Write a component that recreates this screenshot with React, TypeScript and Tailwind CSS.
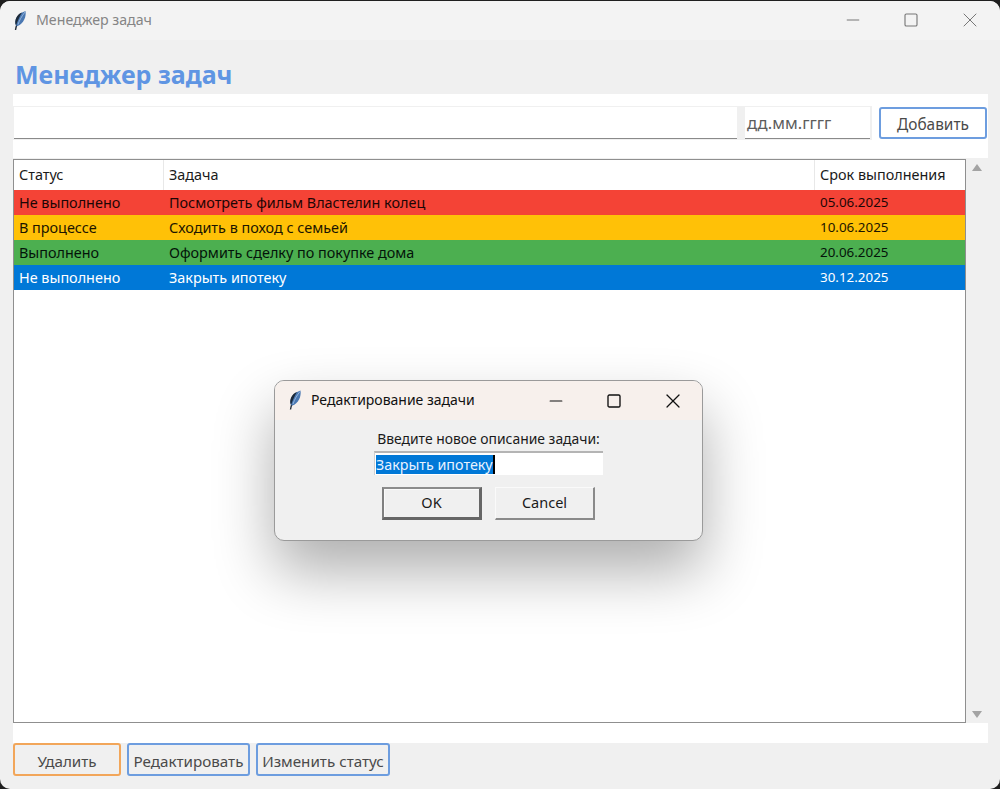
import { Minus, Square, X } from "lucide-react";

const rows = [
  { status: "Не выполнено", task: "Посмотреть фильм Властелин колец", due: "05.06.2025", color: "bg-[#f44336] text-[#1c0605]" },
  { status: "В процессе", task: "Сходить в поход с семьей", due: "10.06.2025", color: "bg-[#ffc107] text-[#1c1500]" },
  { status: "Выполнено", task: "Оформить сделку по покупке дома", due: "20.06.2025", color: "bg-[#4caf50] text-[#04140a]" },
  { status: "Не выполнено", task: "Закрыть ипотеку", due: "30.12.2025", color: "bg-[#0078d7] text-white" },
];

const Feather = ({ className }: { className: string }) => (
  <svg viewBox="0 0 14 20" className={className}>
    <path d="M2.5 19.5 C3 16 3.6 15 4.2 13.6" stroke="#26303c" strokeWidth="1.4" fill="none" />
    <path d="M3 15 C0.6 10 4.5 3 12.5 0.5 C13.5 6 10.5 13.5 4.6 15.5 Z" fill="#4a78b2" />
    <path d="M3 15 C0.6 10 4.5 3 9 2 C6.5 6 4.8 10 3 15 Z" fill="#1c2a3a" />
    <path d="M5 14 C6.5 9.5 8.5 6 12 1.5" stroke="#b4cde9" strokeWidth="0.7" fill="none" />
  </svg>
);

const Col = ({ w, children }: { w: string; children: React.ReactNode }) => (
  <div className={`${w} flex items-center pl-[5px] shrink-0`}>{children}</div>
);

const Controls = ({ tone, thin }: { tone: string; thin: number }) => (
  <div className={`ml-auto flex items-center ${tone}`}>
    <div className="flex w-[58px] justify-center"><Minus className="h-[20px] w-[20px]" strokeWidth={thin * 1.2} /></div>
    <div className="flex w-[58px] justify-center"><Square className="h-[16px] w-[16px]" strokeWidth={thin * 1.7} /></div>
    <div className="flex w-[59px] justify-center"><X className="h-[24px] w-[24px]" strokeWidth={thin} /></div>
  </div>
);

export default function App() {
  return (
    <div className="relative h-[789px] w-[1000px] overflow-hidden bg-[#1f1f1f] font-['Noto_Sans',sans-serif] text-[14.4px]">
      <div className="mt-px flex h-[788px] flex-col overflow-hidden rounded-[10px] bg-[#f0f0f0]">
        <div className="flex h-[39px] shrink-0 items-center bg-[#f3f3f3] pb-px pl-[13px] pr-px">
          <Feather className="h-[21px] w-[14px]" />
          <span className="ml-[9px] text-[14.2px] text-[#858585]">Менеджер задач</span>
          <Controls tone="text-[#777777]" thin={1} />
        </div>

        <h1 className="ml-[15px] mt-[17px] h-[37px] shrink-0 text-[25px] font-bold leading-[34px] text-[#5f95e3]">Менеджер задач</h1>

        <div className="ml-[13px] h-[64px] w-[975px] shrink-0 bg-white pt-[12px]">
          <div className="flex items-start">
            <div className="flex h-[34px] w-[859px] gap-[8px] bg-[#f0f0f0] px-px pt-px">
              <div className="h-[32px] w-[723px] border-b border-b-[#8a8a8a] bg-white" />
              <div className="flex h-[32px] w-[125px] items-center border-b border-b-[#8a8a8a] bg-white pl-[2px] pt-px text-[16.6px] text-[#5c5c5c]">дд.мм.гггг</div>
            </div>
            <button className="ml-[7px] mt-px h-[32px] w-[108px] rounded-[3px] border-2 border-[#6d9ddf] pt-[3px] text-[15.4px] leading-[20px] text-[#4a4a4a]">Добавить</button>
          </div>
        </div>

        <div className="ml-[13px] mt-px flex h-[564px] w-[975px] shrink-0">
          <div className="flex h-[564px] w-[953px] flex-col border border-[#8f8f8f] bg-white">
            <div className="flex h-[30px] shrink-0 text-[#1a1a1a]">
              <Col w="w-[150px] border-r border-r-[#e8e8e8]">Статус</Col>
              <Col w="w-[651px] border-r border-r-[#e8e8e8]">Задача</Col>
              <Col w="flex-1">Срок выполнения</Col>
            </div>
            {rows.map((r) => (
              <div key={r.task + r.status} className={`flex h-[25px] shrink-0 ${r.color}`}>
                <Col w="w-[150px]">{r.status}</Col>
                <Col w="w-[651px]">{r.task}</Col>
                <Col w="flex-1 text-[13.4px]">{r.due}</Col>
              </div>
            ))}
          </div>
          <div className="flex h-[564px] flex-1 flex-col items-center justify-between py-[5px]">
            <div className="h-0 w-0 border-x-[5px] border-b-[7px] border-x-transparent border-b-[#a3a3a3]" />
            <div className="h-0 w-0 border-x-[5px] border-t-[7px] border-x-transparent border-t-[#a3a3a3]" />
          </div>
        </div>

        <div className="ml-[13px] h-[20px] w-[975px] shrink-0 bg-white" />

        <div className="ml-[13px] flex gap-[6px]">
          <button className="h-[33px] w-[108px] rounded-[3px] border-2 border-[#f2a65a] pt-[2px] text-[15.2px] leading-[20px] text-[#4a4a4a]">Удалить</button>
          <button className="h-[33px] w-[123px] rounded-[3px] border-2 border-[#6d9ddf] pt-[2px] text-[15.2px] leading-[20px] text-[#4a4a4a]">Редактировать</button>
          <button className="h-[33px] w-[134px] rounded-[3px] border-2 border-[#6d9ddf] pt-[2px] text-[15.2px] leading-[20px] text-[#4a4a4a]">Изменить статус</button>
        </div>
      </div>

      {/* dialog floats above the main window */}
      <div className="absolute left-[274px] top-[380px] flex h-[161px] w-[429px] flex-col overflow-hidden rounded-[10px] border border-[#9a9a9a] bg-[#f0f0f0] shadow-[0_30px_60px_rgba(0,0,0,0.32)]">
        <div className="flex h-[39px] shrink-0 items-center bg-[#f7f0ec] pl-[13px]">
          <Feather className="mb-[2px] h-[20px] w-[14px]" />
          <span className="mb-[2px] ml-[9px] text-[14px] text-[#111111]">Редактирование задачи</span>
          <Controls tone="text-[#111111]" thin={1.2} />
        </div>
        <div className="flex flex-col items-center text-[#1a1a1a]">
          <div className="mt-[7px] h-[24px] text-[13.9px] leading-[24px]">Введите новое описание задачи:</div>
          <div className="flex h-[24px] w-[229px] items-center border-l border-t-2 border-l-[#d0d0d0] border-t-[#b4b4b4] bg-white pl-px text-[14.3px]">
            <span className="bg-[#0078d7] leading-[19px] text-[#e8f2ff]">Закрыть ипотеку</span>
            <span className="h-[19px] w-[2px] bg-black" />
          </div>
          <div className="mt-[12px] flex gap-[13px]">
            <button className="h-[33px] w-[100px] border-2 border-b-[3px] border-r-[3px] border-b-[#666666] border-l-[#808080] border-r-[#666666] border-t-[#8c8c8c] bg-[#f0f0f0] text-[14.5px] shadow-[inset_1px_1px_0_#fafafa]">OK</button>
            <button className="h-[33px] w-[100px] border border-b-2 border-r-2 border-b-[#8a8a8a] border-l-[#fafafa] border-r-[#8a8a8a] border-t-[#fafafa] bg-[#f0f0f0] text-[14.5px]">Cancel</button>
          </div>
        </div>
      </div>
    </div>
  );
}
